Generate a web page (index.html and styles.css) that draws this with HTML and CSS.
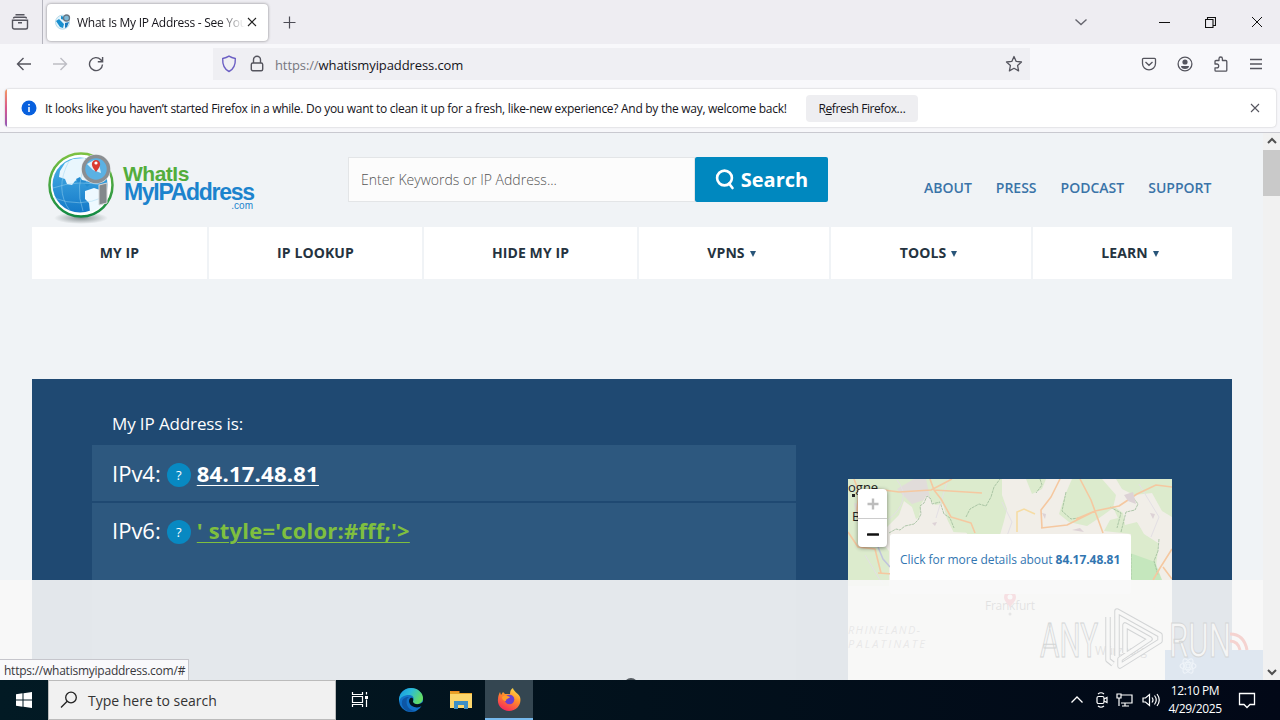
FILE: index.html
```html
<!DOCTYPE html>
<html lang="en">

<head>
    <meta charset="utf-8">
    <title>What Is My IP Address - See Your Public Address</title>
    <meta name="viewport" content="width=device-width, initial-scale=1">
    <link rel="stylesheet" href="styles.css">
</head>

<body>
    <div class="tab-bar">
        <div class="tab-history">
            <svg width="18" height="18" viewBox="0 0 18 18" fill="none" stroke="#55555e" stroke-width="1.4">
                <path d="M4.5 1.7h9M2.5 5.5a1.3 1.3 0 0 1 1.3-1.3h10.4a1.3 1.3 0 0 1 1.3 1.3M1.5 7.2h15v7a1.8 1.8 0 0 1-1.8 1.8H3.3a1.8 1.8 0 0 1-1.8-1.8zM7 9.7h4" />
            </svg>
        </div>
        <div class="tab">
            <svg width="16" height="16" viewBox="0 0 16 16">
                <circle cx="7.5" cy="8.2" r="7" fill="#e4f3fb" stroke="#b5d9e8" />
                <path d="M1 7l3-2 2 2 3 3-1 4-3-1zM6 2l4 1-1 3-3-1z" fill="#198fcf" />
                <path d="M10 9l4-1-2 5-2 1z" fill="#1a79bd" />
                <circle cx="11.5" cy="4" r="3" fill="#7db9d8" stroke="#697581" stroke-width="1.3" />
            </svg>
            <span class="tab-title">What Is My IP Address - See You</span>
            <svg width="10" height="10" viewBox="0 0 10 10" stroke="#222" stroke-width="1.1">
                <path d="M1 1l8 8M9 1L1 9" />
            </svg>
        </div>
        <svg class="new-tab" width="13" height="13" viewBox="0 0 13 13" stroke="#4c4c55" stroke-width="1.2">
            <path d="M6.5 .5v12M.5 6.5h12" />
        </svg>
        <div class="window-buttons">
            <svg width="14" height="14" viewBox="0 0 14 14" fill="none" stroke="#66666f" stroke-width="1.4">
                <path d="M1.5 4.5l5.5 5 5.5-5" />
            </svg>
            <svg class="minimize" width="11" height="11" viewBox="0 0 11 11" stroke="#111">
                <path d="M0 5.5h11" />
            </svg>
            <svg width="11" height="11" viewBox="0 0 11 11" fill="none" stroke="#111" stroke-width="1.1">
                <path d="M.5 2.5h7.5v8H.5zM2.5 2.5v-2h8v8h-2.500" />
            </svg>
            <svg width="12" height="12" viewBox="0 0 12 12" stroke="#111">
                <path d="M1 1l10 10M11 1L1 11" />
            </svg>
        </div>
    </div>

    <div class="toolbar">
        <div class="nav-buttons">
            <svg width="16" height="16" viewBox="0 0 16 16" fill="none" stroke="#55555e" stroke-width="1.4">
                <path d="M15 8H1.500M7.500 2L1.500 8l6 6" />
            </svg>
            <svg width="16" height="16" viewBox="0 0 16 16" fill="none" stroke="#bdbdc4" stroke-width="1.4">
                <path d="M1 8h13.500M8.500 2l6 6-6 6" />
            </svg>
            <svg width="16" height="16" viewBox="0 0 16 16" fill="none" stroke="#55555e" stroke-width="1.4">
                <path d="M14.500 8.500A6.500 6.500 0 1 1 12.800 3.700L14 5M14.600 1v4.700H9.800" />
            </svg>
        </div>
        <div class="url-bar">
            <svg width="16" height="18" viewBox="0 0 16 18" fill="none" stroke="#6c60c4" stroke-width="1.4">
                <path d="M8 1.200c2 1.300 4 1.900 6.300 2.300.3 5.800-1.300 10.500-6.300 13-5-2.500-6.600-7.200-6.300-13C4 3.100 6 2.500 8 1.200z" />
            </svg>
            <svg width="14" height="18" viewBox="0 0 14 18" fill="none" stroke="#55555e" stroke-width="1.4">
                <rect x="1.300" y="8" width="11.400" height="7.800" rx="1.500" />
                <path d="M3.500 8V4.800a3.500 3.500 0 0 1 7 0V8" />
            </svg>
            <span class="url"><span class="scheme">https://</span>whatismyipaddress.com</span>
            <svg width="18" height="18" viewBox="0 0 18 18" fill="none" stroke="#55555e" stroke-width="1.3" stroke-linejoin="round">
                <path d="M9 1.500l2.200 4.900 5.300.6-3.900 3.600 1 5.300L9 13.300l-4.600 2.600 1-5.300L1.500 7l5.300-.6z" />
            </svg>
        </div>
        <div class="toolbar-icons">
            <svg width="16" height="16" viewBox="0 0 16 16" fill="none" stroke="#55555e" stroke-width="1.3">
                <path d="M1.500 3.300A1 1 0 0 1 2.500 2.300h11a1 1 0 0 1 1 1V7.500a6.500 6.300 0 0 1-13 0zM4.500 6l3.500 3.300L11.500 6" />
            </svg>
            <svg width="16" height="16" viewBox="0 0 16 16">
                <circle cx="8" cy="8" r="6.900" fill="none" stroke="#55555e" stroke-width="1.3" />
                <circle cx="8" cy="6" r="2.600" fill="#55555e" />
                <path d="M4 10h8c0 1.800-1.600 3-4 3s-4-1.200-4-3z" fill="#55555e" />
            </svg>
            <svg width="16" height="16" viewBox="0 0 16 16" fill="none" stroke="#55555e" stroke-width="1.3" stroke-linejoin="round">
                <path d="M2 7V5.500a1 1 0 0 1 1-1h3V2.700a1.700 1.700 0 0 1 3.400 0v1.800h3.400a1 1 0 0 1 1 1v8.700a1 1 0 0 1-1 1H3a1 1 0 0 1-1-1v-2.400h1.800a1.900 1.900 0 0 0 0-3.800H2z" />
            </svg>
            <svg width="14" height="14" viewBox="0 0 14 14" stroke="#55555e" stroke-width="1.3">
                <path d="M1 2.500h12M1 7h12M1 11.500h12" />
            </svg>
        </div>
    </div>

    <div class="notification">
        <div class="notification-card">
            <svg width="16" height="16" viewBox="0 0 16 16">
                <circle cx="8" cy="8" r="7.500" fill="#0860de" />
                <path d="M8 7v5M8 4v1.600" stroke="#fff" stroke-width="1.5" />
            </svg>
            <span class="notification-text">It looks like you haven’t started Firefox in a while. Do you want to clean it up for a fresh, like-new experience? And by the way, welcome back!</span>
            <button class="refresh"><span>R<u>e</u>fresh Firefox…</span></button>
            <svg class="notification-close" width="10" height="10" viewBox="0 0 10 10" stroke="#55555e" stroke-width="1.1">
                <path d="M1 1l8 8M9 1L1 9" />
            </svg>
        </div>
    </div>

    <div class="viewport">
        <div class="page">
            <header class="header">
                <div class="logo">
                    <svg width="70" height="74" viewBox="0 0 70 74">
                        <defs>
                            <linearGradient id="ring" x1="0" y1="0" x2="0" y2="1">
                                <stop offset="0" stop-color="#7cc142" />
                                <stop offset="1" stop-color="#128a43" />
                            </linearGradient>
                            <linearGradient id="sea" x1="0" y1="0" x2="0" y2="1">
                                <stop offset="0" stop-color="#4db4e8" />
                                <stop offset="1" stop-color="#1479c8" />
                            </linearGradient>
                            <radialGradient id="shade">
                                <stop offset="0" stop-color="#899294" />
                                <stop offset="1" stop-color="#899294" stop-opacity="0" />
                            </radialGradient>
                        </defs>
                        <ellipse cx="33" cy="66" rx="27" ry="6" fill="url(#shade)" />
                        <circle cx="33" cy="33" r="31.500" fill="#fff" stroke="url(#ring)" stroke-width="2.500" />
                        <circle cx="32" cy="33" r="27.500" fill="url(#sea)" />
                        <path d="M12 19l5-8 8-4 12-1 3 9-4 9 5 5-5 1-5-3-4 2-3 4-5-1-2-5-6-2z" fill="#e9f6fd" />
                        <path d="M37 39l9-3 9 3v13l-5 5-8 3-1-9-4-4z" fill="#eef9ff" />
                        <path d="M28 27l4-2 2 3 5 1-4 3-5-1zM36 31l6 1-3 3z" fill="#258cd0" />
                        <path d="M5 36q25-9 54-2M6 46q26 10 50-1M21 9Q6 37 22 59M39 9q-13 25-4 50" fill="none" stroke="#9bd4f1" stroke-width=".6" opacity=".8" />
                        <path d="M51 33l8-2v20l-8 2z" fill="#83888c" stroke="#d6d8da" />
                        <circle cx="48" cy="17" r="12.500" fill="#63b6e5" stroke="#e1e4e6" stroke-width="4.500" />
                        <circle cx="48" cy="17" r="12.500" fill="#5bb1e3" stroke="#8a8e92" stroke-width="3.500" />
                        <path d="M39 12l7-4 5 4 2 9-8-3z" fill="#dff2fb" />
                        <path d="M48 20q-5-6-4-9a4.200 4.200 0 0 1 8 0q1 3-4 9z" fill="#d93a31" />
                        <circle cx="48" cy="11" r="1.600" fill="#fff" />
                    </svg>
                    <div class="logo-text">
                        <span class="logo-top">WhatIs</span>
                        <span class="logo-main">MyIPAddress</span>
                        <span class="logo-com">.com</span>
                    </div>
                </div>
                <div class="search">
                    <div class="search-field">Enter Keywords or IP Address...</div>
                    <button class="search-button">
                        <svg width="20" height="22" viewBox="0 0 20 22" fill="none" stroke="#fff" stroke-width="2.6" stroke-linecap="round">
                            <circle cx="9.500" cy="9" r="7.400" />
                            <path d="M14 14.500l3.500 4.500" />
                        </svg>
                        <span>Search</span>
                    </button>
                </div>
                <nav class="top-links">
                    <a>ABOUT</a>
                    <a>PRESS</a>
                    <a>PODCAST</a>
                    <a>SUPPORT</a>
                </nav>
            </header>

            <nav class="main-nav">
                <a>MY IP</a>
                <a>IP LOOKUP</a>
                <a>HIDE MY IP</a>
                <a class="has-menu">VPNS <i class="caret"></i></a>
                <a class="has-menu">TOOLS <i class="caret"></i></a>
                <a class="has-menu">LEARN <i class="caret"></i></a>
            </nav>

            <main class="hero">
                <section class="addresses">
                    <p class="intro">My IP Address is:</p>
                    <div class="address-row">
                        <span class="label">IPv4:</span>
                        <span class="help">?</span>
                        <a class="ip">84.17.48.81</a>
                    </div>
                    <div class="address-row tall">
                        <span class="label">IPv6:</span>
                        <span class="help">?</span>
                        <a class="ip green">' style='color:#fff;'&gt;</a>
                    </div>
                </section>
                <section class="map">
                    <svg width="324" height="201" viewBox="0 0 324 201">
                        <rect width="324" height="201" fill="#f1eee8" />
                        <g fill="#dcebcd">
                            <path d="M0 0h152l-5 18-16 8-7 28-40-2-9-16-7 4-4-12-8-6-5 14-12 12-12 4H0z" />
                            <path d="M66 0h88v16l5 14-3 12-4 14h-32l-10-15-18-7-8-22-4 3-14-3z" />
                            <path d="M224 0h30l14 16-3 13-11 8-15 10-18-4-10-8 6-19z" />
                            <path d="M268 0h56v49l-13-4-5-9-14-6-2-12-16-8zM178 0h20l-4 10-10 5z" />
                            <path d="M264 26l11 8 2 12 12-3 9 13 13 7-4 33-6 5h-18V55l-27-3 6-11 8-2z" />
                            <path d="M0 40l16 4 25 28v35H0z" />
                            <path d="M282 74l25 9 7 18h-31z" fill="#c5e7bd" />
                        </g>
                        <path d="M49 10l17-10h12l4 19-18 6zM6 24l14 3 8 20-17 2z" fill="#e1dcda" />
                        <path d="M41 52l17-6 13-7 2-14 6-9 8 10 8-1 4 15 7 14H43z" fill="#f1eee8" />
                        <path d="M286 16l18-2 10 18 10 6v50h-12l-2-24-14-9-8-14-12 2z" fill="#f1eee8" />
                        <g fill="none" stroke="#9dbb99" stroke-width=".8" stroke-dasharray="3 .7">
                            <path d="M41 54l7-4 4 1 5-4 9-2 4-4 3-6-1-8 4-3 3-7 4 3 1 5 8-2 4 12 6 4 4 10" />
                            <path d="M118 38l4-8 9-5 7 2 5-9 3-10 6-8M192 0l2 6-6 8M218 13l-4 19 9 8 8-1M273 53l5-20 9-2 3-6-6-8M262 28l11 6-4 15" />
                            <path d="M283 75v25M311 60l-1 12-4 10 4 14" />
                        </g>
                        <g fill="none" stroke="#e3dfe4" stroke-width="1">
                            <path d="M49 1q16 20-9 40M100 0l-12 39M154 23l10 20-5 14M291 5l20 33-8 20M17 76l18 30" />
                        </g>
                        <path d="M30 68l5 12 7 8" fill="none" stroke="#c0c4dc" stroke-width="1.5" />
                        <g fill="none" stroke="#f5c8a0" stroke-width="1.6" stroke-linejoin="round">
                            <path d="M28 10l23 3 32-2 21-11M82 0l4 11 7 9 10 18 20 6 4 10M86 11l48 3" />
                            <path d="M212 0l-9 18-10 13 1 18M193 49l26-3 28-14 24-5 18-12 19-9 16 2M232 0l11 21 4 11 8 22M247 32l-19 8" />
                            <path d="M0 53l10 15 17 2 6 24M30 94l15 1M324 70l-12 19-7 12M6 0l5 13-2 18 9 27M315 88l9 12" />
                        </g>
                        <path d="M169 53v-20l7-3 11 5" fill="none" stroke="#f6dca4" stroke-width="1.600" />
                        <path d="M276 16l9-3 3 12-8-3zM224 51l8-2 4 4zM194 34l4 1-1 5zM302 34l5 1-2 5zM84 44l5-1-2 4z" fill="#ddd2d6" />
                        <g class="map-places">
                            <text x="0" y="12.500">ogne</text>
                            <text x="4" y="42">B</text>
                            <rect x="4" y="15" width="3" height="3" />
                        </g>
                        <path d="M60 130l55-12 30 31-12 45-70-10zM180 115l57 21 70-8v65l-105-6z" fill="#e6edda" opacity=".35" />
                    </svg>
                    <svg class="pin-layer" width="324" height="100" viewBox="0 0 324 100">
                        <text x="137" y="30" class="city" textLength="50">Frankfurt</text>
                        <text x="247" y="75" class="city" textLength="52">Würzburg</text>
                        <text x="0" y="54" class="region" textLength="72">RHINELAND-</text>
                        <text x="0" y="68" class="region" textLength="77">PALATINATE</text>
                        <path d="M162 28c-1-4-6-6-6-11a6 6 0 0 1 12 0c0 5-5 7-6 11z" fill="#e00020" />
                        <circle cx="162" cy="17" r="2.500" fill="#fff" />
                        <circle cx="162" cy="34" r="1.500" fill="#333" />
                    </svg>
                    <div class="map-zoom">
                        <span class="off"><svg width="12" height="12" viewBox="0 0 12 12"><path d="M6 .5v11M.5 6h11" stroke="#bdbdbd" stroke-width="2.400" /></svg></span>
                        <span><svg width="12" height="12" viewBox="0 0 12 12"><path d="M1 6.500h10" stroke="#111" stroke-width="2.600" stroke-linecap="round" /></svg></span>
                    </div>
                    <div class="popup">Click for more details about <b>84.17.48.81</b></div>
                </section>
            </main>
            <div class="ad-overlay"></div>
            <div class="chat-strip">
                <svg width="18" height="18" viewBox="0 0 18 18" fill="none" stroke="#eef3f8" stroke-width="1.2">
                    <circle cx="9" cy="9" r="2" />
                    <ellipse cx="9" cy="9" rx="8" ry="3.500" />
                    <ellipse cx="9" cy="9" rx="8" ry="3.500" transform="rotate(60 9 9)" />
                    <ellipse cx="9" cy="9" rx="8" ry="3.500" transform="rotate(120 9 9)" />
                </svg>
            </div>
            <div class="handle"></div>
            <svg class="watermark" width="222" height="70" viewBox="0 0 222 70">
                <g fill="none" stroke="#f5d3d0" stroke-width="3">
                    <path d="M194 26q14 0 17 16M194 33q8 0 10 9" />
                </g>
                <g class="mark-text">
                    <text x="4" y="49" textLength="58" lengthAdjust="spacingAndGlyphs">ANY</text>
                    <text x="133" y="49" textLength="62" lengthAdjust="spacingAndGlyphs">RUN</text>
                </g>
                <g fill="none" stroke-linejoin="round">
                    <path d="M72 9v43l5 4M81 48V3l43 24v6L84 58v-7l30-20-25-14v28" stroke="#d3d5d6" stroke-width="5.500" />
                    <path d="M72 9v43l5 4M81 48V3l43 24v6L84 58v-7l30-20-25-14v28" stroke="#f8f8f7" stroke-width="3.500" />
                </g>
            </svg>
            <div class="status">https://whatismyipaddress.com/#</div>
        </div>
        <div class="scrollbar">
            <svg width="10" height="8" viewBox="0 0 10 8" fill="none" stroke="#505050" stroke-width="2"><path d="M1 6l4-4 4 4" /></svg>
            <div class="thumb"></div>
            <svg class="down" width="10" height="8" viewBox="0 0 10 8" fill="none" stroke="#505050" stroke-width="2"><path d="M1 2l4 4 4-4" /></svg>
        </div>
    </div>

    <div class="taskbar">
        <div class="start">
            <svg width="16" height="16" viewBox="0 0 16 16" fill="#fff">
                <path d="M0 2.200l6.500-.9v6.200H0zM7.500 1.200L16 0v7.500H7.500zM0 8.500h6.500v6.200L0 13.800zM7.500 8.500H16V16l-8.500-1.200z" />
            </svg>
        </div>
        <div class="task-search">
            <svg width="18" height="18" viewBox="0 0 18 18" fill="none" stroke="#222" stroke-width="1.3">
                <circle cx="11" cy="6.500" r="5.300" />
                <path d="M7.200 10.300L1 16.500" />
            </svg>
            <span>Type here to search</span>
        </div>
        <div class="task-icon">
            <svg width="18" height="18" viewBox="0 0 18 18" fill="none" stroke="#fff" stroke-width="1.2">
                <path d="M1.500 1v2.500h10V1M1.500 5.500h10v6h-10zM1.500 16v-2.500h10V16M15.500 1v2.500M15.500 8.500V16" />
                <path d="M14 5h3v3h-3z" fill="#fff" stroke="none" />
            </svg>
        </div>
        <div class="task-icon edge">
            <svg width="24" height="24" viewBox="0 0 24 24">
                <defs>
                    <linearGradient id="edge-top" x1="0" y1="0" x2="1" y2=".4">
                        <stop offset="0" stop-color="#1596e0" />
                        <stop offset=".5" stop-color="#2bbbd9" />
                        <stop offset="1" stop-color="#62dc66" />
                    </linearGradient>
                </defs>
                <circle cx="12" cy="12" r="12" fill="#1272c8" />
                <path d="M0 11C1 4 6 0 12 0c7 0 12 5 12 10 0 4-3 6-6 6-4 0-5-1-4-3 2-4-1-6-4-6-5 0-9 2-10 7z" fill="url(#edge-top)" />
                <path d="M8 11c-2 7 3 12 9 12-8 3-15-3-14-9 0-3 3-5 7-5z" fill="#0d56a5" />
                <path d="M11.500 10c3-1 3 2 2.500 4 2 3 6 3 10 0v3c-3 3-8 3-11 1-3-2-4-6-1.500-8z" fill="#02141d" />
            </svg>
        </div>
        <div class="task-icon">
            <svg width="22" height="20" viewBox="0 0 22 20">
                <path d="M0 1h8l2 2h12v14H0z" fill="#e8a329" />
                <path d="M0 4h22v14H0z" fill="#fcd66c" />
                <path d="M4 11h14v8h-4v-4H8v4H4z" fill="#3d8fc6" />
                <path d="M1 1h8l1 1H1z" fill="#f08b20" />
            </svg>
        </div>
        <div class="task-icon active">
            <svg width="24" height="24" viewBox="0 0 24 24">
                <defs>
                    <linearGradient id="fox" x1=".8" y1="0" x2=".3" y2="1">
                        <stop offset="0" stop-color="#ffe34a" />
                        <stop offset=".45" stop-color="#ff8a2a" />
                        <stop offset="1" stop-color="#f5255d" />
                    </linearGradient>
                </defs>
                <path d="M3 5l1 3 2-3 2 2 5 0c0-3 1-5 3-6 0 3 5 5 7 9 2 7-3 14-11 14C5 24 0 18 1 12c0-3 1-5 2-7z" fill="url(#fox)" />
                <circle cx="12.500" cy="12.500" r="4.800" fill="#6a3fd0" />
                <path d="M5 10c2-2 5-2 8 0-1 2-4 1-4 4-3 0-4-2-4-4z" fill="#ff9c2b" />
            </svg>
        </div>
        <div class="tray">
            <svg width="14" height="14" viewBox="0 0 14 14" fill="none" stroke="#fff" stroke-width="1.3"><path d="M1.500 9.500L7 4l5.500 5.500" /></svg>
            <svg width="14" height="18" viewBox="0 0 14 18" fill="none" stroke="#fff" stroke-width="1.2">
                <rect x="2" y="5.500" width="7" height="7" rx="1.500" />
                <path d="M9 8l3-1.500v5L9 10M3 3q3-2.500 6 0M3 15q3 2.500 6 0" />
            </svg>
            <svg width="17" height="16" viewBox="0 0 17 16" fill="none" stroke="#fff" stroke-width="1.2">
                <path d="M5 3h11v8H5M9 11v3M6 14h7M1 2h4v4H1zM3 6v8" />
            </svg>
            <svg width="18" height="16" viewBox="0 0 18 16" fill="none" stroke="#fff" stroke-width="1.2">
                <path d="M1 6h2.500L7.500 2.500v11L3.500 10H1zM10 5.500q2 2.500 0 5M12.500 3.500q3.500 4.500 0 9M15 2q4.500 6 0 12" />
            </svg>
            <div class="clock"><span>12:10 PM</span><span>4/29/2025</span></div>
            <svg width="18" height="18" viewBox="0 0 18 18" fill="none" stroke="#fff" stroke-width="1.3">
                <path d="M1.500 2.500h15v11H12l-3 3-3-3H1.500z" />
            </svg>
        </div>
    </div>
</body>

</html>
```
FILE: styles.css
```css
* {
    box-sizing: border-box;
}

body {
    margin: 0;
    width: 1280px;
    height: 720px;
    overflow: hidden;
    display: flex;
    flex-direction: column;
    font-family: 'Open Sans', sans-serif;
    font-size: 12px;
    color: #15141a;
    background-color: #f1f4f6;
}

svg {
    display: block;
    flex-shrink: 0;
}

button {
    border: none;
    padding: 0;
    font-family: inherit;
}

/* browser window */
.tab-bar {
    height: 44px;
    flex-shrink: 0;
    display: flex;
    align-items: center;
    background-color: #eeedf2;
}

.tab-history {
    width: 43px;
    height: 44px;
    padding: 13px 0 0 11px;
    border-right: 1px solid #b5b5be;
}

.tab {
    width: 221px;
    height: 37px;
    margin-left: 4px;
    padding: 0 11px 0 8px;
    display: flex;
    align-items: center;
    background-color: #fff;
    border-radius: 4px;
    box-shadow: 0 0 3px rgba(0, 0, 0, 0.45);
}

.tab-title {
    width: 168px;
    margin: 0 2px 0 6px;
    overflow: hidden;
    white-space: nowrap;
    letter-spacing: -0.27px;
    mask-image: linear-gradient(to right, #000 140px, transparent 168px);
}

.new-tab {
    margin-left: 15px;
}

.window-buttons {
    margin-left: auto;
    padding-right: 17px;
    display: flex;
    align-items: center;
    gap: 35px;
}

.minimize {
    margin-left: 36px;
}

.toolbar {
    height: 44px;
    flex-shrink: 0;
    display: flex;
    align-items: center;
    padding: 0 17px 4px 16px;
    background-color: #f8f8fb;
}

.nav-buttons {
    display: flex;
    gap: 20px;
}

.url-bar {
    width: 817px;
    height: 32px;
    margin-left: 109px;
    padding: 0 7px 0 8px;
    display: flex;
    align-items: center;
    background-color: #efeff3;
}

.url-bar svg + svg {
    margin-left: 13px;
}

.url {
    flex: 1;
    margin: 2px 0 0 11px;
    font-size: 13px;
    letter-spacing: -0.1px;
}

.scheme {
    color: #77777f;
}

.toolbar-icons {
    margin-left: auto;
    display: flex;
    align-items: center;
    gap: 20px;
}

.notification {
    height: 45px;
    flex-shrink: 0;
    padding: 1px 4px 5px 5px;
    background-color: #f7f7fa;
    border-bottom: 1px solid #c9c9d0;
}

.notification-card {
    height: 38px;
    padding: 0 16px 0 16px;
    display: flex;
    align-items: center;
    background: linear-gradient(#f59a62, #d8578e, #9059b8) left / 2px 100% no-repeat #fff;
    border-radius: 4px;
    box-shadow: 0 0 2px rgba(0, 0, 0, 0.25);
}

.notification-text {
    width: 742px;
    margin-left: 8px;
    white-space: nowrap;
    letter-spacing: -0.285px;
}

.refresh {
    width: 112px;
    height: 27px;
    margin-left: 19px;
    background-color: #eeeef1;
    border-radius: 4px;
    font-size: 12px;
    letter-spacing: -0.42px;
    color: #15141a;
}

.notification-close {
    margin-left: auto;
}

.viewport {
    height: 547px;
    display: flex;
}

.page {
    position: relative;
    width: 1263px;
    height: 547px;
    padding: 0 31px 0 32px;
    overflow: hidden;
    background-color: #f0f3f6;
}

.scrollbar {
    width: 17px;
    padding: 4px 0;
    display: flex;
    flex-direction: column;
    align-items: center;
    background-color: #f1f1f1;
}

.thumb {
    width: 17px;
    height: 46px;
    margin-top: 5px;
    background-color: #c9c9c9;
}

.scrollbar .down {
    margin-top: auto;
}

/* site header */
.header {
    height: 94px;
    display: flex;
    padding-left: 16px;
}

.logo {
    width: 300px;
    padding-top: 19px;
    display: flex;
}

.logo-text {
    width: 130px;
    margin: 13px 0 0 5px;
    display: flex;
    flex-direction: column;
    font-family: 'Liberation Sans', sans-serif;
    white-space: nowrap;
}

.logo-top {
    font-size: 21px;
    line-height: 18px;
    font-weight: bold;
    color: #53ad3c;
    letter-spacing: -0.5px;
}

.logo-main {
    padding-left: 1px;
    font-size: 23px;
    line-height: 18px;
    font-weight: bold;
    color: #1c83cd;
    letter-spacing: -1.3px;
}

.logo-com {
    align-self: flex-end;
    font-size: 10px;
    line-height: 9px;
    color: #1c83cd;
}

.search {
    width: 480px;
    height: 45px;
    margin-top: 24px;
    display: flex;
}

.search-field {
    width: 347px;
    padding-left: 12px;
    line-height: 44px;
    font-size: 14px;
    font-weight: 300;
    color: #555;
    background-color: #fcfcfc;
    border: 1px solid #e3e5e7;
}

.search-button {
    width: 133px;
    display: flex;
    align-items: center;
    justify-content: center;
    gap: 6px;
    background-color: #0088bf;
    border-radius: 2px;
    font-size: 20px;
    font-weight: bold;
    color: #fff;
}

.top-links {
    margin: 45px 0 0 96px;
    display: flex;
    gap: 24px;
    font-size: 14px;
    line-height: 20px;
    font-weight: 600;
    color: #3a73a8;
}

.main-nav {
    height: 52px;
    display: grid;
    grid-template-columns: 175px 213px 213px 190px 200px 199px;
    gap: 2px;
}

.main-nav a {
    padding-bottom: 1px;
    display: flex;
    align-items: center;
    justify-content: center;
    gap: 5px;
    background-color: #fff;
    font-size: 14px;
    font-weight: bold;
    letter-spacing: 0.1px;
    color: #253340;
}

.main-nav .has-menu {
    padding-right: 5px;
}

.caret {
    margin-top: 3px;
    border: 3.5px solid transparent;
    border-top: 6px solid #295579;
    border-bottom: 0;
}

/* address panel */
.hero {
    height: 400px;
    margin-top: 100px;
    padding: 0 60px;
    display: flex;
    justify-content: space-between;
    background-color: #1f4972;
}

.addresses {
    width: 704px;
    padding-top: 33px;
    color: #fff;
}

.intro {
    margin: 0 0 9px 20px;
    font-size: 17px;
    line-height: 24px;
    letter-spacing: -0.12px;
}

.address-row {
    height: 56px;
    margin-bottom: 2px;
    padding: 0 20px;
    display: flex;
    align-items: center;
    background-color: #2d587f;
    font-size: 22px;
}

.address-row.tall {
    height: 180px;
    padding-top: 12px;
    align-items: flex-start;
}

.help {
    width: 24px;
    height: 24px;
    margin: 4px 6px 0;
    border-radius: 50%;
    background-color: #0889c2;
    font-size: 13px;
    line-height: 24px;
    text-align: center;
}

.tall .help {
    margin-top: 5px;
}

.ip {
    font-weight: bold;
    letter-spacing: 0.25px;
    text-decoration: underline;
    text-decoration-thickness: 1px;
    text-underline-offset: 3px;
}

.green {
    letter-spacing: 0.2px;
    color: #7fbf3f;
}

.map {
    position: relative;
    width: 324px;
    height: 300px;
    margin-top: 100px;
    background-color: #f1eee8;
    overflow: hidden;
}

.map-places {
    font-size: 13px;
    fill: #222;
}

.pin-layer {
    position: absolute;
    left: 0;
    top: 101px;
}

.city {
    font-size: 12px;
    fill: #111;
}

.region {
    font-size: 11px;
    font-style: italic;
    fill: #555;
}

.map-zoom {
    position: absolute;
    left: 10px;
    top: 10px;
    width: 29px;
    height: 58px;
    background-color: #fff;
    border-radius: 4px;
    box-shadow: 0 1px 4px rgba(0, 0, 0, 0.45);
}

.map-zoom span {
    height: 29px;
    display: flex;
    align-items: center;
    justify-content: center;
}

.map-zoom .off {
    height: 30px;
    border-bottom: 1px solid #ccc;
}

.popup {
    position: absolute;
    left: 42px;
    top: 55px;
    width: 241px;
    height: 60px;
    padding-left: 10px;
    line-height: 52px;
    font-size: 12px;
    letter-spacing: -0.05px;
    white-space: nowrap;
    color: #3276b1;
    background-color: #fff;
    border-radius: 3px;
}

/* layers over the page */
.ad-overlay {
    position: absolute;
    left: 0;
    right: 0;
    bottom: 0;
    height: 100px;
    background-color: rgba(248, 248, 248, 0.9);
}

.chat-strip {
    position: absolute;
    right: 0;
    bottom: 0;
    width: 98px;
    height: 30px;
    padding: 7px 0 0 14px;
    background-color: #dfe7f0;
}

.handle {
    position: absolute;
    left: 624px;
    bottom: -12px;
    width: 14px;
    height: 14px;
    border-radius: 50%;
    background-color: #555b61;
}

.watermark {
    position: absolute;
    right: 5px;
    bottom: 2px;
}

.mark-text {
    font-family: Roboto, sans-serif;
    font-size: 49px;
    fill: #f5f5f5;
    stroke: #d3d5d6;
    stroke-width: 1px;
}

.status {
    position: absolute;
    left: 0;
    bottom: 0;
    width: 189px;
    height: 21px;
    padding-left: 4px;
    line-height: 22px;
    letter-spacing: -0.24px;
    white-space: nowrap;
    background-color: #f9f9fb;
    border: solid #c6c6cc;
    border-width: 1px 1px 0 0;
    color: #38383d;
}

/* taskbar */
.taskbar {
    height: 40px;
    display: flex;
    background: linear-gradient(to right, #021a24, #02111c 50%, #020817);
}

.start {
    width: 48px;
    padding: 12px 16px;
}

.task-search {
    width: 288px;
    padding: 0 11px;
    display: flex;
    align-items: center;
    gap: 10px;
    background-color: #f1f1f1;
    border: 1px solid #bbb;
    font-size: 14px;
    color: #333;
}

.task-icon {
    width: 48px;
    display: flex;
    align-items: center;
    justify-content: center;
}

.task-icon.edge {
    width: 53px;
}

.task-icon.active {
    background-color: #344651;
    border-bottom: 2px solid #76b9ed;
}

.tray {
    margin-left: auto;
    padding-right: 24px;
    display: flex;
    align-items: center;
    gap: 9px;
}

.tray svg:nth-child(2) {
    margin: 0 -2px 0 2px;
}

.clock {
    width: 60px;
    margin: 0 4px 0 -4px;
    display: flex;
    flex-direction: column;
    align-items: center;
    font-size: 12px;
    line-height: 18px;
    letter-spacing: -0.4px;
    color: #fff;
}
```
